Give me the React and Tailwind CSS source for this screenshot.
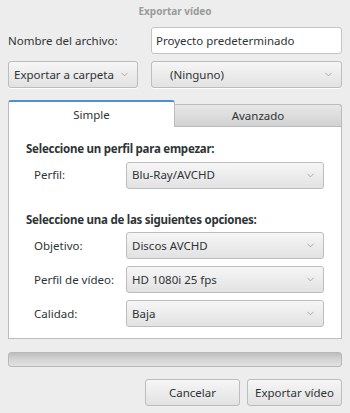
import { ChevronDown } from "lucide-react";

function Combo({ label, className = "", textClass = "" }) {
  return (
    <div
      className={`flex h-[27px] items-center justify-between rounded-[3px] border border-[#bdbdbd] bg-gradient-to-b from-[#f6f6f6] to-[#e2e2e2] pl-[5px] pr-[7px] shadow-[0_1px_0_rgba(255,255,255,0.8)] ${className}`}
    >
      <span className={`whitespace-nowrap text-[#2e3436] ${textClass}`}>{label}</span>
      <ChevronDown size={11} strokeWidth={1.5} className="shrink-0 text-[#8c8c8c]" />
    </div>
  );
}

function Row({ label, value }) {
  return (
    <div className="flex items-center">
      <span className="w-[100px] shrink-0 pl-[8px] text-[#2e3436]">{label}</span>
      <Combo label={value} className="w-[199px]" />
    </div>
  );
}

export default function App() {
  return (
    <div
      className="flex h-[413px] w-[350px] flex-col bg-[#ededed] text-[11.5px] leading-none"
      style={{ fontFamily: '"Noto Sans", "DejaVu Sans", sans-serif' }}
    >
      <div className="flex h-[21px] items-center justify-center text-[10px] font-bold text-[#9a9a9a]">
        Exportar vídeo
      </div>

      <div className="flex flex-col gap-[7px] px-[8px] pt-[6px]">
        <div className="flex items-center justify-between">
          <span className="text-[#2e3436]">Nombre del archivo:</span>
          <div className="flex h-[27px] w-[191px] items-center rounded-[3px] border border-[#c4c4c4] bg-white px-[4px] text-[#2e3436]">
            Proyecto predeterminado
          </div>
        </div>
        <div className="flex items-center justify-between">
          <Combo label="Exportar a carpeta" className="w-[130px]" />
          <Combo label="(Ninguno)" className="w-[191px]" textClass="pl-[13px]" />
        </div>
      </div>

      <div className="mx-[8px] mt-[12px] flex flex-col">
        <div className="flex items-end">
          <div className="z-10 -mb-px flex h-[27px] w-[167px] items-center justify-center rounded-t-[3px] border-x border-t-2 border-[#bcbcbc] border-t-[#4a90d9] bg-white text-[#2e3436]">
            Simple
          </div>
          <div className="flex h-[22px] flex-1 items-center justify-center rounded-tr-[3px] border-r border-t border-[#bcbcbc] bg-gradient-to-b from-[#e8e8e8] to-[#d2d2d2] text-[#2e3436]">
            Avanzado
          </div>
        </div>
        <div className="flex h-[213px] flex-col border border-[#bcbcbc] bg-white px-[17px]">
          <div className="mt-[16px] font-bold tracking-[-0.25px] text-[#2e3436]">
            Seleccione un perfil para empezar:
          </div>
          <div className="mt-[7px]">
            <Row label="Perfil:" value="Blu-Ray/AVCHD" />
          </div>
          <div className="mt-[25px] font-bold tracking-[-0.25px] text-[#2e3436]">
            Seleccione una de las siguientes opciones:
          </div>
          <div className="mt-[7px] flex flex-col gap-[7px]">
            <Row label="Objetivo:" value="Discos AVCHD" />
            <Row label="Perfil de vídeo:" value="HD 1080i 25 fps" />
            <Row label="Calidad:" value="Baja" />
          </div>
        </div>
      </div>

      <div className="mx-[8px] mt-[13px] h-[15px] rounded-[3px] border border-[#b8b8b8] bg-gradient-to-b from-[#bdbdbd] via-[#d4d4d4] to-[#e2e2e2]" />

      <div className="mt-[12px] flex justify-end gap-[7px] px-[8px]">
        <div className="flex h-[27px] w-[95px] items-center justify-center rounded-[3px] border border-[#bdbdbd] bg-gradient-to-b from-[#f6f6f6] to-[#e2e2e2] text-[#2e3436]">
          Cancelar
        </div>
        <div className="flex h-[27px] w-[95px] items-center justify-center rounded-[3px] border border-[#bdbdbd] bg-gradient-to-b from-[#f6f6f6] to-[#e2e2e2] text-[#2e3436]">
          Exportar vídeo
        </div>
      </div>
    </div>
  );
}
